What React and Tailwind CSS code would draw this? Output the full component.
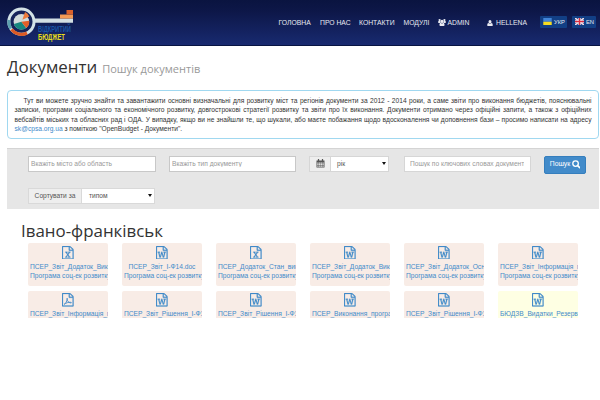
import React from "react";

const PAGE =
  "M1468 380q28 28 48 76t20 88v1152q0 40-28 68t-68 28h-1344q-40 0-68-28t-28-68v-1600q0-40 28-68t68-28h896q40 0 88 20t76 48zm-444-244v376h376q-10-29-22-41l-313-313q-12-12-41-22zm384 1528v-1024h-416q-40 0-68-28t-28-68v-416h-768v1536h1280z";
const WORD =
  "M233 768v107h70l164 661h159l128-485q7-20 10-46 2-16 2-24h4l3 24q1 3 3.5 20t5.5 26l128 485h159l164-661h70v-107h-300v107h90l-99 438q-5 20-7 46l-2 21h-4l-3-21q-1-5-4-21t-5-25l-144-545h-114l-144 545q-2 9-4.5 24.5t-3.5 21.5l-4 21h-4l-2-21q-2-26-7-46l-99-438h90v-107h-300z";
const EXCEL =
  "M429 1430v106h281v-106h-75l103-161q5-7 10-16.5t7.5-13.5 3.5-4h2q1 4 5 10 2 4 4.5 7.5t6 8 6.5 8.5l107 161h-76v106h291v-106h-68l-192-273 195-282h67v-107h-279v107h74l-103 159q-4 7-10 16.5t-9 13.5l-2 3h-2q-1-4-5-10-6-11-17-23l-106-159h76v-107h-290v107h68l189 272-194 283h-68z";

function FileIcon({ kind }) {
  return (
    <svg viewBox="0 0 1536 1792" className="mx-auto block h-[13.5px] w-[11.6px]" fill="currentColor" stroke="currentColor" strokeWidth="30">
      <path d={PAGE} />
      {kind === "word" && <path d={WORD} />}
      {kind === "excel" && <path d={EXCEL} />}
      {kind === "pdf" && (
        <path
          d="M290 1500C440 1440 640 1120 700 840C740 640 640 640 660 820C700 1080 900 1300 1190 1330C1290 1330 1260 1240 1130 1230C860 1220 560 1290 290 1500Z"
          fill="none"
          strokeWidth="120"
        />
      )}
    </svg>
  );
}

function CalendarIcon() {
  return (
    <svg viewBox="0 0 18 18" className="h-[9px] w-[9px]">
      <path d="M1 3H17V17H1Z" fill="#555" />
      <path d="M2.5 7H5.3V9.3H2.5ZM6 7H8.7V9.3H6ZM9.4 7H12.1V9.3H9.4ZM12.8 7H15.5V9.3H12.8ZM2.5 10.2H5.3V12.5H2.5ZM6 10.2H8.7V12.5H6ZM9.4 10.2H12.1V12.5H9.4ZM12.8 10.2H15.5V12.5H12.8ZM2.5 13.4H5.3V15.7H2.5ZM6 13.4H8.7V15.7H6ZM9.4 13.4H12.1V15.7H9.4ZM12.8 13.4H15.5V15.7H12.8Z" fill="#ddd" />
      <path d="M5 1V5M13 1V5" stroke="#555" strokeWidth="2.6" strokeLinecap="round" />
    </svg>
  );
}

function SearchIcon() {
  return (
    <svg viewBox="0 0 16 16" className="h-[8.5px] w-[8.5px]" fill="none" stroke="currentColor">
      <circle cx="6.7" cy="6.7" r="5.2" strokeWidth="2.5" />
      <path d="M10.6 10.6L14.5 14.5" strokeWidth="3" strokeLinecap="round" />
    </svg>
  );
}

function UserIcon() {
  return (
    <svg viewBox="0 0 12 12" className="h-[6px] w-[6px]" fill="currentColor">
      <ellipse cx="6" cy="3.6" rx="3" ry="3.5" />
      <path d="M3 6C1 6.5 0.5 8.5 0.5 10.3C0.5 11.4 1.2 12 2.2 12H9.8C10.8 12 11.5 11.4 11.5 10.3C11.5 8.5 11 6.5 9 6C7.5 8 4.5 8 3 6Z" />
    </svg>
  );
}

function UsersIcon() {
  return (
    <svg viewBox="0 0 16 14" className="h-[7px] w-[8px]" fill="currentColor">
      <circle cx="3.2" cy="2.2" r="2.2" />
      <circle cx="12.8" cy="2.2" r="2.2" />
      <circle cx="8" cy="4.8" r="3.1" />
      <path d="M1 4C0 5 0 8 1.2 8H4.2C4.7 7.2 5 7 5.4 6.9C4.7 6 4.6 5 4.7 4Z" />
      <path d="M15 4C16 5 16 8 14.8 8H11.8C11.3 7.2 11 7 10.6 6.9C11.3 6 11.4 5 11.3 4Z" />
      <path d="M5.2 7.6C3.6 8 2.9 9.8 2.9 12C2.9 13.2 3.6 14 4.8 14H11.2C12.4 14 13.1 13.2 13.1 12C13.1 9.8 12.4 8 10.8 7.6C9.4 9.2 6.6 9.2 5.2 7.6Z" />
    </svg>
  );
}

function Caret() {
  return (
    <svg viewBox="0 0 4 3" className="h-[3px] w-[4px]">
      <path d="M0 0H4L2 3Z" fill="#111" />
    </svg>
  );
}

function Logo() {
  return (
    <div className="relative h-[45px] w-[77px] shrink-0">
      <svg viewBox="0 0 77 45" className="block h-[45px] w-[77px]">
        <path d="M34 18.5H73V22.8H34Z" fill="#d3dfe3" />
        <path d="M60 14.5H73V18.6H60Z" fill="#f29a55" />
        <path d="M66.5 10H73V14.6H60V14.4H66.5Z" fill="#d9612c" />
        <circle cx="21.4" cy="21.7" r="12.6" fill="#17245a" stroke="#d3e2e6" strokeWidth="3" />
        <path d="M9 20A12.6 12.6 0 0 0 10.8 28.5" fill="none" stroke="#5b9fae" strokeWidth="3" />
        <path d="M11.5 29.6A12.6 12.6 0 0 0 27 33" fill="none" stroke="#dd5a24" strokeWidth="3.2" />
        <circle cx="21.4" cy="21.7" r="7.8" fill="#d3dcda" />
        <path d="M21.4 21.7L13.9 24A7.8 7.8 0 0 0 26.2 27.9Z" fill="#16877f" />
        <path d="M21.4 21.7L26.2 27.9A7.8 7.8 0 0 0 29.2 20.7Z" fill="#e35f28" />
        <path d="M22.4 19.7L25 12A8.5 8.5 0 0 1 29.3 16.6Z" fill="#ee7b3b" />
      </svg>
      <div className="absolute left-[38px] top-[24.5px] origin-top-left scale-x-[0.61] whitespace-nowrap text-[9.4px] font-bold leading-[8.5px] text-[#1a55a5]">
        ВІДКРИТИЙ
      </div>
      <div className="absolute left-[38px] top-[33.2px] origin-top-left scale-x-[0.62] whitespace-nowrap text-[9.4px] font-bold leading-[8.5px] text-[#e9df18]">
        БЮДЖЕТ
      </div>
    </div>
  );
}

function Header() {
  return (
    <header className="flex h-[45.5px] items-start border-b border-[#081442] bg-linear-to-b from-[#0a1440] via-[#0d1748] via-25% to-[#182a70] text-[6.8px] leading-[10px] text-[#e8eaf2]">
      <Logo />
      <nav className="ml-[201.5px] flex whitespace-nowrap pt-[17.5px]">
        <span className="w-[41.5px]">ГОЛОВНА</span>
        <span className="w-[39px]">ПРО НАС</span>
        <span className="w-[44.5px]">КОНТАКТИ</span>
        <span className="w-[34.5px]">МОДУЛІ</span>
        <span className="flex w-[48.5px] items-center gap-[1.5px]">
          <UsersIcon />ADMIN
        </span>
        <span className="flex w-[53.5px] items-center gap-[3.5px]">
          <UserIcon />HELLENA
        </span>
      </nav>
      <div className="mt-[15.5px] flex gap-[5px] text-[5.8px]">
        <span className="flex h-[12px] w-[27px] items-center gap-[2px] rounded-[1px] bg-[#123f85] pl-[3px]">
          <svg viewBox="0 0 9 8" className="h-[7.5px] w-[9px]">
            <path d="M0 0H9V4H0Z" fill="#4285d8" />
            <path d="M0 4H9V8H0Z" fill="#f5dc20" />
          </svg>
          УКР
        </span>
        <span className="flex h-[12px] w-[24px] items-center gap-[2px] rounded-[1px] bg-[#123f85] pl-[3px]">
          <svg viewBox="0 0 9 7" className="h-[7px] w-[9px]">
            <path d="M0 0H9V7H0Z" fill="#244a94" />
            <path d="M0 0L9 7M9 0L0 7" stroke="#f4dfe4" strokeWidth="1.5" />
            <path d="M4.5 0V7M0 3.5H9" stroke="#fff" strokeWidth="2.4" />
            <path d="M4.5 0V7M0 3.5H9" stroke="#d92b40" strokeWidth="1.4" />
          </svg>
          EN
        </span>
      </div>
    </header>
  );
}

function Filters() {
  return (
    <section className="ml-[7px] mt-[9px] h-[61px] w-[592px] border-t border-[#d4d4d4] bg-[#e6e6e6] pl-[21px] text-[6.65px] text-[#555]">
      <div className="flex h-[38.5px] items-start pt-[6.5px]">
        <input
          className="h-[16px] w-[127.5px] border border-[#c8c8c8] bg-white px-[2px] placeholder:text-[#999]"
          placeholder="Вкажіть місто або область"
        />
        <input
          className="ml-[13.5px] h-[16px] w-[127px] border border-[#c8c8c8] bg-white px-[2px] placeholder:text-[#999]"
          placeholder="Вкажіть тип документу"
        />
        <div className="ml-[13px] flex h-[16px] w-[80px] border border-[#d6d6d6] bg-white">
          <span className="flex w-[21px] items-center justify-center border-r border-[#d6d6d6] bg-[#eee]">
            <CalendarIcon />
          </span>
          <span className="flex flex-1 items-center justify-between pl-[6px] pr-[2px]">
            рік
            <Caret />
          </span>
        </div>
        <input
          className="ml-[14.5px] h-[16px] w-[127px] border border-[#d6d6d6] bg-white px-[5.5px] placeholder:text-[#999]"
          placeholder="Пошук по ключових словах документу"
        />
        <button className="ml-[13.5px] flex h-[18px] w-[42px] items-center justify-center gap-[1.5px] rounded-[2px] border border-[#357ebd] bg-[#428bca] text-[6.8px] text-white">
          Пошук <SearchIcon />
        </button>
      </div>
      <div className="flex h-[16px] w-[127px] border border-[#d9d9d9] bg-white">
        <span className="flex w-[53px] items-center justify-center whitespace-nowrap border-r border-[#d9d9d9] bg-[#eee]">
          Сортувати за
        </span>
        <span className="flex flex-1 items-center justify-between pl-[7px] pr-[2px]">
          типом
          <Caret />
        </span>
      </div>
    </section>
  );
}

const PROGRAM = "Програма соц-ек розвитку";
const documents = [
  { kind: "excel", name: "ПСЕР_Звіт_Додаток_Виконання" },
  { kind: "word", name: "ПСЕР_Звіт_І-Ф14.doc", centered: true },
  { kind: "excel", name: "ПСЕР_Додаток_Стан_виконання" },
  { kind: "word", name: "ПСЕР_Звіт_Додаток_Виконання" },
  { kind: "word", name: "ПСЕР_Звіт_Додаток_Основні" },
  { kind: "word", name: "ПСЕР_Звіт_Інформація_про" },
  { kind: "pdf", name: "ПСЕР_Звіт_Інформація_про" },
  { kind: "word", name: "ПСЕР_Звіт_Рішення_І-Ф13" },
  { kind: "word", name: "ПСЕР_Звіт_Рішення_І-Ф13" },
  { kind: "word", name: "ПСЕР_Виконання_програми" },
  { kind: "word", name: "ПСЕР_Звіт_Рішення_І-Ф13" },
  { kind: "word", name: "БЮДЗВ_Видатки_Резерв", yellow: true },
];

function DocumentCard({ doc, short }) {
  return (
    <a
      className={`block w-[80px] overflow-hidden whitespace-nowrap px-[2px] pt-[2.7px] text-[6.65px] leading-[9.3px] text-[#428bca] ${
        doc.yellow ? "bg-[#feffe3]" : "bg-[#f8ece6]"
      } ${short ? "h-[27px] rounded-t-[2px]" : "h-[43px] rounded-[2px]"}`}
    >
      <FileIcon kind={doc.kind} />
      <div className={`mt-[2.4px] ${doc.centered ? "text-center" : ""}`}>{doc.name}</div>
      {!short && <div>{PROGRAM}</div>}
    </a>
  );
}

export default function App() {
  return (
    <div className="h-[400px] w-[600px] overflow-hidden bg-white font-['Liberation_Sans',sans-serif] text-[#333]">
      <Header />
      <h1 className="ml-[7px] flex h-[44.5px] items-baseline whitespace-nowrap pt-[8.5px] font-['Open_Sans',sans-serif] text-[16.9px] leading-[26px]">
        Документи
        <small className="ml-[5px] text-[11px] text-[#999]">Пошук документів</small>
      </h1>
      <section className="ml-[7px] h-[49px] w-[592px] rounded-[4px] border border-[#a0d8f0] px-[6.5px] pt-[5px] text-justify indent-[9px] text-[6.65px] leading-[9.35px]">
        Тут ви можете зручно знайти та завантажити основні визначальні для розвитку міст та регіонів документи за 2012 -
        2014 роки, а саме звіти про виконання бюджетів, пояснювальні записки, програми соціального та економічного
        розвитку, довгострокові стратегії розвитку та звіти про їх виконання. Документи отримано через офіційні запити,
        а також з офіційних вебсайтів міських та обласних рад і ОДА. У випадку, якщо ви не знайшли те, що шукали, або
        маєте побажання щодо вдосконалення чи доповнення бази – просимо написати на адресу{" "}
        <a className="text-[#428bca]">sk@cpsa.org.ua</a> з поміткою "OpenBudget - Документи".
      </section>
      <Filters />
      <h2 className="ml-[21px] mt-[8.5px] h-[25.5px] whitespace-nowrap font-['Open_Sans',sans-serif] text-[16.9px] leading-[25px]">
        Івано-франківськ
      </h2>
      <main className="ml-[28px] grid w-[550px] grid-cols-[repeat(6,80px)] gap-x-[14px] gap-y-[4.5px]">
        {documents.map((doc, index) => (
          <DocumentCard key={index} doc={doc} short={index > 5} />
        ))}
      </main>
    </div>
  );
}
